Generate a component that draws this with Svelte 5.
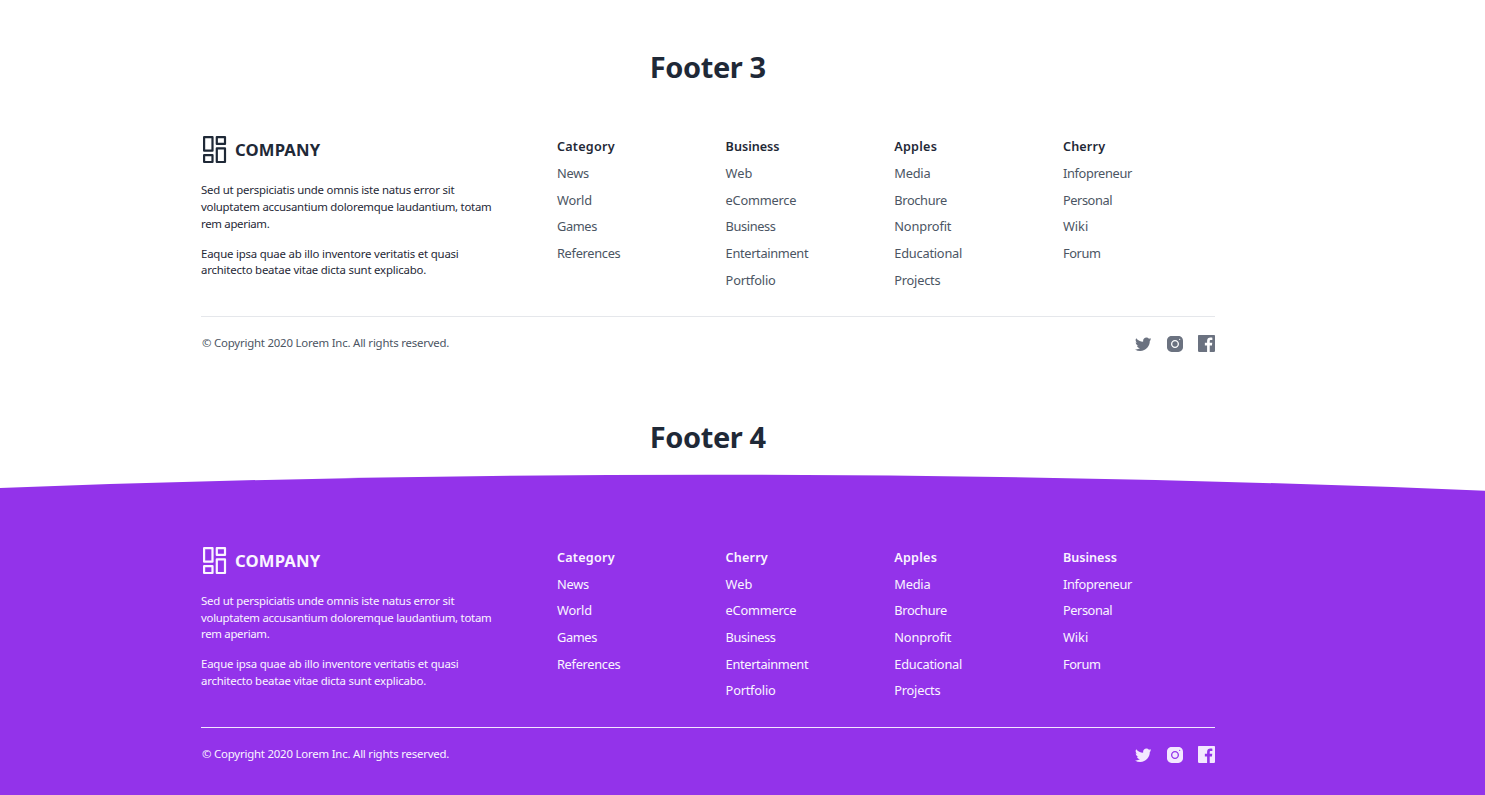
<script>
  const about = [
    [
      ['Sed ut perspiciatis unde omnis iste natus error sit', -0.22],
      ['voluptatem accusantium doloremque laudantium, totam', -0.26],
      ['rem aperiam.', -0.3]
    ],
    [
      ['Eaque ipsa quae ab illo inventore veritatis et quasi', -0.2],
      ['architecto beatae vitae dicta sunt explicabo.', -0.2]
    ]
  ];
  const lists = [
    [['News', -0.2], ['World', -0.2], ['Games', -0.35], ['References', -0.3]],
    [['Web', 0], ['eCommerce', -0.22], ['Business', -0.38], ['Entertainment', -0.33], ['Portfolio', -0.22]],
    [['Media', -0.2], ['Brochure', -0.35], ['Nonprofit', -0.15], ['Educational', -0.22], ['Projects', -0.22]],
    [['Infopreneur', -0.35], ['Personal', -0.42], ['Wiki', 0], ['Forum', -0.4]]
  ];
  const tracking = { Category: 0.25, Business: 0, Apples: 0.25, Cherry: 0.17 };
  const footers = [
    { title: 'Footer 3', theme: 'light', heads: ['Category', 'Business', 'Apples', 'Cherry'] },
    { title: 'Footer 4', theme: 'purple', heads: ['Category', 'Cherry', 'Apples', 'Business'] }
  ];
</script>

<main>
  {#each footers as f}
    <h1 class={f.theme}>{f.title}</h1>
    <footer class={f.theme}>
      {#if f.theme === 'purple'}
        <svg class="curve" viewBox="0 0 1485 20" preserveAspectRatio="none" aria-hidden="true">
          <path d="M0 14Q742.5 -13.9 1485 16.7V20H0Z" fill="#9333ea" />
        </svg>
      {/if}
      <div class="inner">
        <div class="grid">
          <div class="brand">
            <a class="logo" href="#top">
              <svg width="27" height="28" viewBox="0 0 27 28" fill="none" stroke="currentColor" stroke-width="2.2" stroke-linejoin="round">
                <rect x="3.1" y="1.1" width="8.4" height="13.6" />
                <rect x="15.8" y="1.1" width="8.2" height="6.8" />
                <rect x="3.1" y="19.2" width="8.4" height="6.8" />
                <rect x="15.8" y="12.4" width="8.2" height="13.6" />
              </svg>
              <span>COMPANY</span>
            </a>
            {#each about as para}
              <p>
                {#each para as [line, ls]}
                  <span style:letter-spacing="{ls}px">{line}</span>
                {/each}
              </p>
            {/each}
          </div>
          {#each lists as items, i}
            <nav>
              <h2 style:letter-spacing="{tracking[f.heads[i]]}px">{f.heads[i]}</h2>
              <ul>
                {#each items as [item, ls]}<li><a href="#top" style:letter-spacing="{ls}px">{item}</a></li>{/each}
              </ul>
            </nav>
          {/each}
        </div>
        <div class="bottom">
          <small>© Copyright 2020 Lorem Inc. All rights reserved.</small>
          <div class="social">
            <svg class="bird" width="16.5" height="16.5" viewBox="0 0 24 24" fill="currentColor"><path d="M24 4.6c-.9.4-1.8.7-2.8.8 1-.6 1.8-1.6 2.2-2.7-1 .6-2 1-3.1 1.2-.9-1-2.2-1.6-3.6-1.6-3.2 0-5.5 3-4.8 6-4.1-.2-7.7-2.1-10.1-5.1a4.9 4.9 0 0 0 1.5 6.6c-.8 0-1.6-.2-2.2-.6-.1 2.3 1.6 4.4 3.9 4.9-.7.2-1.5.2-2.2.1.6 2 2.4 3.4 4.6 3.4A9.9 9.9 0 0 1 0 19.5 14 14 0 0 0 7.5 21.7c9.1 0 14.3-7.7 14-14.6 1-.7 1.8-1.6 2.5-2.5z" /></svg>
            <svg width="20" height="20" viewBox="0 0 30 30" fill="currentColor"><circle cx="15" cy="15" r="4" /><path d="M19.999 3h-10C6.14 3 3 6.142 3 10.001v10C3 23.86 6.142 27 10.001 27h10C23.86 27 27 23.858 27 19.999v-10C27 6.14 23.858 3 19.999 3zM15 21c-3.309 0-6-2.691-6-6s2.691-6 6-6 6 2.691 6 6-2.691 6-6 6zm7-12c-.552 0-1-.448-1-1s.448-1 1-1 1 .448 1 1-.448 1-1 1z" /></svg>
            <svg width="17" height="17" viewBox="0 0 24 24" fill="currentColor"><path d="M22.676 0H1.324C.593 0 0 .593 0 1.324v21.352C0 23.408.593 24 1.324 24h11.494v-9.294H9.689v-3.621h3.129V8.41c0-3.099 1.894-4.785 4.659-4.785 1.325 0 2.464.097 2.796.141v3.24h-1.921c-1.5 0-1.792.721-1.792 1.771v2.311h3.584l-.465 3.63H16.56V24h6.115c.733 0 1.325-.592 1.325-1.324V1.324C24 .593 23.408 0 22.676 0" /></svg>
          </div>
        </div>
      </div>
    </footer>
  {/each}
</main>

<style>
  :global(body) { background: #fff; overflow: hidden; }
  main {
    width: 1485px;
    height: 795px;
    overflow: hidden;
    font-family: "Segoe UI", "Noto Sans", sans-serif;
    color: #1f2937;
  }
  h1 {
    margin: 0;
    padding-right: 69.5px;
    padding-bottom: 1px;
    font-size: 29px;
    line-height: 34px;
    font-weight: 700;
    letter-spacing: -0.4px;
    text-align: center;
  }
  h1.light { padding-top: 50px; }
  h1.purple { padding-top: 67px; }
  footer.light { height: 268px; }
  footer.purple { height: 340px; padding-top: 19px; color: #faf5ff; }
  .curve { display: block; width: 1485px; height: 20px; }
  .inner { padding: 51px 270px 40px 201px; }
  footer.purple .inner { padding-top: 54px; margin-top: -1px; background: #9333ea; }
  .grid {
    display: grid;
    grid-template-columns: 339.3px repeat(4, 152px);
    gap: 16.67px;
    height: 180px;
  }
  a { color: inherit; text-decoration: none; }
  .logo { display: flex; align-items: center; gap: 7px; height: 28px; margin-bottom: 18px; }
  .light .logo { margin-bottom: 18.3px; }
  .logo span { font-size: 16.67px; line-height: 28px; font-weight: 700; letter-spacing: 0.15px; }
  p { margin: 0 0 13.33px; font-size: 11.4px; line-height: 16.67px; }
  p span { display: block; white-space: nowrap; }
  h2 { margin: 0; font-size: 12.6px; line-height: 26.67px; font-weight: 600; }
  ul { margin: -0.3px 0 0; padding: 0; list-style: none; color: #4b5563; }
  li { font-size: 12.8px; line-height: 26.67px; }
  nav { margin-top: -2.4px; }
  .bottom {
    display: flex;
    align-items: center;
    justify-content: space-between;
    height: 53px;
    border-top: 1px solid #e5e7eb;
    color: #4b5563;
  }
  small { padding: 0 0 3px 1px; font-size: 11.4px; letter-spacing: -0.2px; }
  .social { display: flex; align-items: center; gap: 13px; color: #6b7280; }
  .bird { margin: 1px 1px 0 0; }
  .purple ul { margin-top: -0.6px; }
  .purple ul, .purple .bottom { color: #faf5ff; }
  .purple .bottom { border-color: #f3e8ff; }
  .purple .social { color: #f3e8ff; }
</style>
